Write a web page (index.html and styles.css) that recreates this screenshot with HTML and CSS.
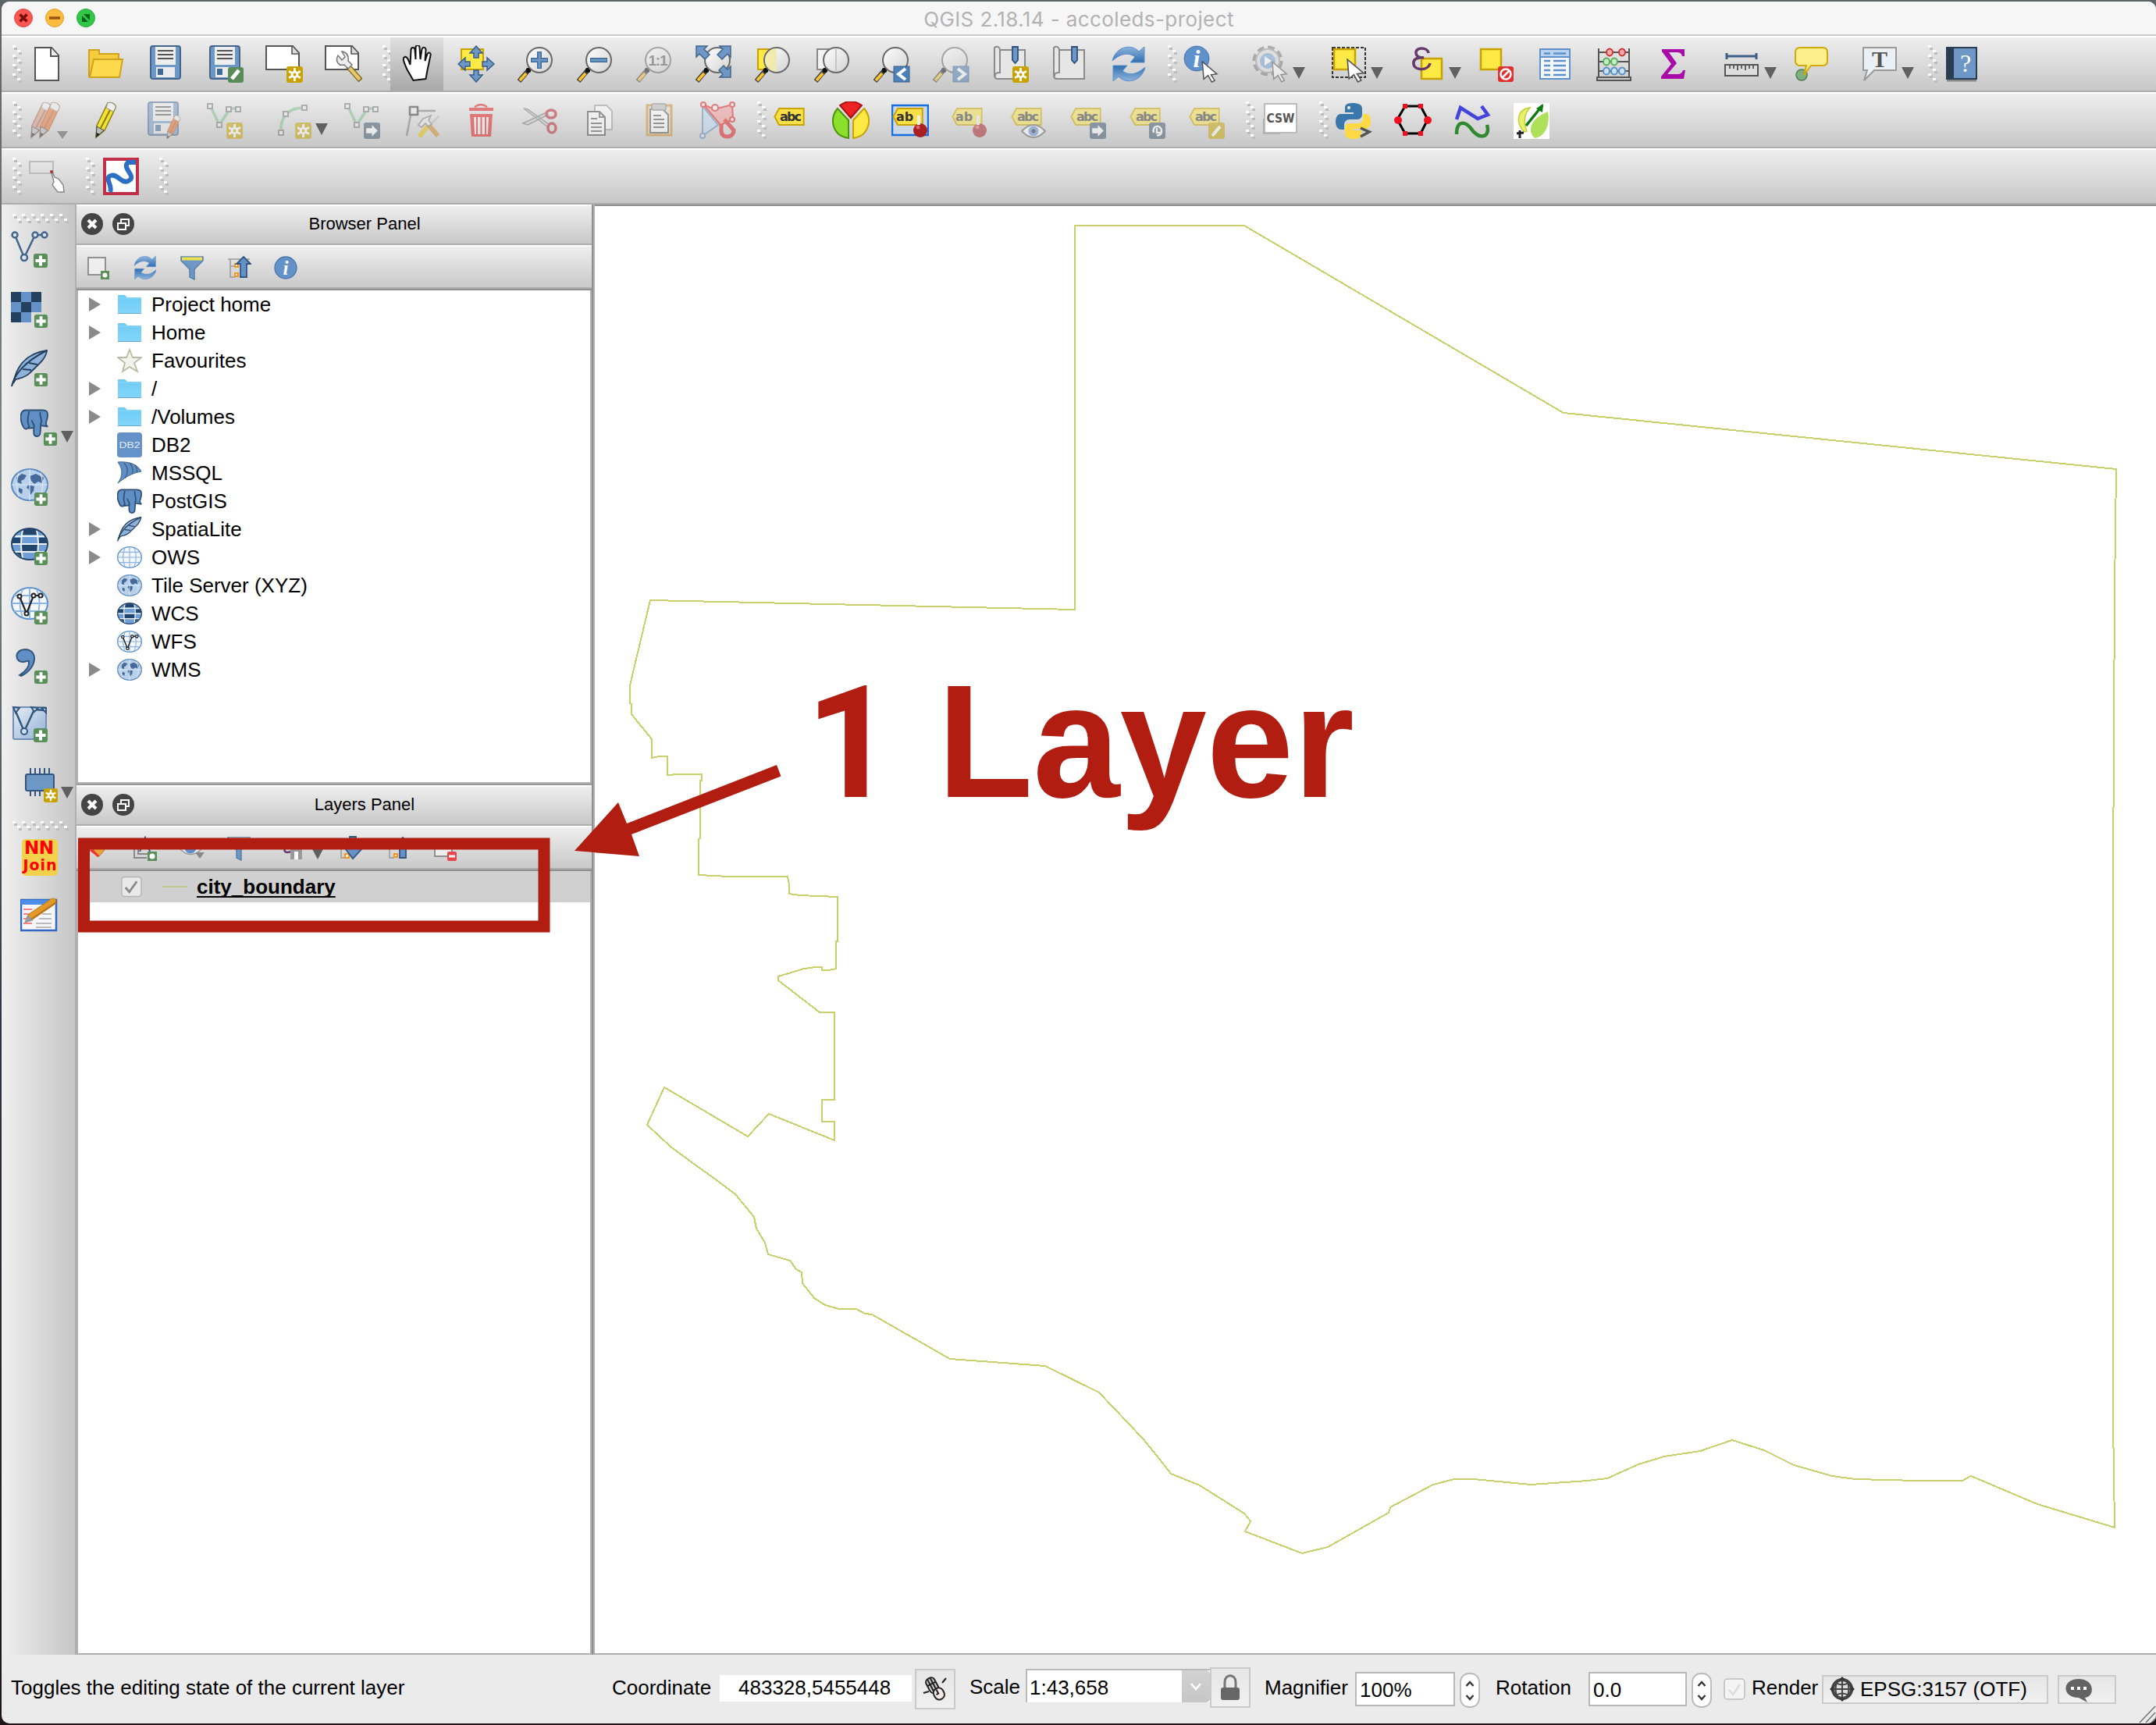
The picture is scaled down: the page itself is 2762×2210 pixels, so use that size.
FILE: index.html
```html
<!DOCTYPE html>
<html lang="en">
<head>
<meta charset="utf-8">
<title>QGIS 2.18.14 - accoleds-project</title>
<link rel="stylesheet" href="styles.css">
</head>
<body>
<svg class="defs" width="0" height="0" aria-hidden="true">
<defs>
<linearGradient id="gLens" x1="0" y1="0" x2="1" y2="1"><stop offset="0" stop-color="#fff"/><stop offset="1" stop-color="#d2d2d2"/></linearGradient>
<linearGradient id="gBlue" x1="0" y1="0" x2="0" y2="1"><stop offset="0" stop-color="#8fb4dc"/><stop offset="1" stop-color="#2f6fb3"/></linearGradient>
<linearGradient id="gFolder" x1="0" y1="0" x2="0" y2="1"><stop offset="0" stop-color="#6ccbf5"/><stop offset="1" stop-color="#83d5fa"/></linearGradient>
<linearGradient id="gPage" x1="0" y1="0" x2="1" y2="1"><stop offset="0" stop-color="#e8eef5"/><stop offset="1" stop-color="#8fb0d6"/></linearGradient>
<symbol id="grip-v" viewBox="0 0 12 50"><g fill="#fff"><path d="M0 1h4v3H0zM0 13h4v3H0zM0 25h4v3H0zM0 37h4v3H0zM6 7h4v3H6zM6 19h4v3H6zM6 31h4v3H6zM6 43h4v3H6z"/></g><g fill="#bdbdbd"><path d="M2 4h4v3H2zM2 16h4v3H2zM2 28h4v3H2zM2 40h4v3H2zM8 10h4v3H8zM8 22h4v3H8zM8 34h4v3H8zM8 46h4v3H8z"/></g></symbol>
<symbol id="grip-h" viewBox="0 0 74 12"><g fill="#fff"><path d="M0 0h4v3H0zM12 0h4v3h-4zM24 0h4v3h-4zM36 0h4v3h-4zM48 0h4v3h-4zM60 0h4v3h-4zM6 6h4v3H6zM18 6h4v3h-4zM30 6h4v3h-4zM42 6h4v3h-4zM54 6h4v3h-4zM66 6h4v3h-4z"/></g><g fill="#bdbdbd"><path d="M2 3h4v3H2zM14 3h4v3h-4zM26 3h4v3h-4zM38 3h4v3h-4zM50 3h4v3h-4zM62 3h4v3h-4zM8 9h4v3H8zM20 9h4v3h-4zM32 9h4v3h-4zM44 9h4v3h-4zM56 9h4v3h-4zM68 9h4v3h-4z"/></g></symbol>
<symbol id="b-plus" viewBox="0 0 20 20"><rect x="1" y="1" width="18" height="18" rx="3" fill="#5b8f5a"/><path d="M10 3.500v13M3.500 10h13" stroke="#fff" stroke-width="4"/></symbol>
<symbol id="b-star" viewBox="0 0 20 20"><rect x="0" y="0" width="20" height="20" rx="3" fill="#c8a200"/><path d="M10 2v16M3 6l14 8M17 6L3 14" stroke="#fff" stroke-width="2.600"/><circle cx="10" cy="10" r="4.500" fill="#fff"/><circle cx="10" cy="10" r="1.800" fill="#c8a200"/></symbol>
<symbol id="b-arrow" viewBox="0 0 20 20"><rect width="20" height="20" rx="3" fill="#3c566d"/><path d="M3 7h7V3l7 7-7 7v-4H3z" fill="#fff"/></symbol>
<symbol id="mag" viewBox="0 0 48 48"><path d="M14 33L3 46" stroke="#444" stroke-width="6"/><path d="M12 36L4 45" stroke="#ffc62b" stroke-width="3.500"/><circle cx="15" cy="32" r="3.200" fill="#111"/><circle cx="29" cy="19" r="16" fill="url(#gLens)" stroke="#6a6a6a" stroke-width="2"/></symbol>
<symbol id="cursor" viewBox="0 0 24 30"><path d="M1 1l20 17-8 1 5 8-4 2-5-9-6 5z" fill="#fff" stroke="#555" stroke-width="1.600"/></symbol>
<symbol id="tag" viewBox="0 0 42 24"><path d="M7 1H40V23H7L1 12z" fill="#f8e045" stroke="#c8a200" stroke-width="2"/></symbol>

<symbol id="i-new" viewBox="0 0 48 48"><path d="M9 3H30L39 13V45H9Z" fill="#fff" stroke="#555" stroke-width="2"/><path d="M29 3V14H39" fill="#eee" stroke="#555" stroke-width="2"/></symbol>
<symbol id="i-open" viewBox="0 0 48 48"><path d="M2 6H15V11H40V40H2Z" fill="#f5cd3c" stroke="#d0a21d" stroke-width="2"/><path d="M8 18H45L41 41H3Z" fill="#fdd94c" stroke="#d0a21d" stroke-width="2"/></symbol>
<symbol id="i-save" viewBox="0 0 48 48"><rect x="5" y="1" width="38" height="42" rx="3" fill="#6d97c4" stroke="#44658b" stroke-width="2"/><rect x="11" y="2" width="26" height="23" fill="#eee"/><path d="M14 7h20M14 12h20M14 17h20" stroke="#555" stroke-width="2"/><rect x="12" y="28" width="24" height="13" fill="#ececec"/><rect x="14" y="30" width="7" height="8" fill="#3f6a97"/></symbol>
<symbol id="i-saveas" viewBox="0 0 48 48"><use href="#i-save"/><rect x="28" y="28" width="20" height="20" rx="3" fill="#5a8c5a"/><path d="M33 43l9-11" stroke="#fff" stroke-width="5"/></symbol>
<symbol id="i-comp" viewBox="0 0 48 48"><path d="M1 1H35L43 10V31H1Z" fill="#fff" stroke="#555" stroke-width="2"/><path d="M34 1V11H43" fill="#ddd" stroke="#555" stroke-width="1.600"/><use href="#b-star" x="27" y="27" width="21" height="21"/></symbol>
<symbol id="i-mgr" viewBox="0 0 48 48"><path d="M1 1H35L43 10V31H1Z" fill="#fff" stroke="#555" stroke-width="2"/><path d="M34 1V11H43" fill="#ddd" stroke="#555" stroke-width="1.600"/><path d="M30 27l16 18" stroke="#77601e" stroke-width="7"/><path d="M30 27l15 17" stroke="#e4c869" stroke-width="4.500"/><path d="M17 13c-4 8 1 14 8 12l5 5 5-5-5-5c1-7-2-11-8-12l4 7-4 4z" fill="#eee" stroke="#777" stroke-width="1.500"/></symbol>
<symbol id="i-hand" viewBox="0 0 48 48"><path transform="translate(3.500 0)" d="M16 45L8 31C3 20 2 16 5 15c3-1 5 4 7 10L13 6c0-4 5-4 5 0l1 12V3c0-4 5-4 5 0l1 15 2-13c1-3 5-3 5 1l-1 14 3-9c2-3 5-1 4 2l-4 19-2 11z" fill="#fff" stroke="#111" stroke-width="2"/></symbol>
<symbol id="i-pan" viewBox="0 0 48 48"><rect x="5" y="5" width="28" height="26" fill="#ffe945" stroke="#c8a200" stroke-width="2"/><g id="panarrow"><path d="M24 1l8 9h-5v6h-6v-6h-5z" fill="#6d97c4" stroke="#3a5e87" stroke-width="1.500"/></g><use href="#panarrow" transform="rotate(90 24 24)"/><use href="#panarrow" transform="rotate(180 24 24)"/><use href="#panarrow" transform="rotate(270 24 24)"/></symbol>
<symbol id="i-zin" viewBox="0 0 48 48"><use href="#mag"/><path d="M29 8v22M18 19h22" stroke="#3f6a97" stroke-width="6"/><path d="M29 9v20M19 19h20" stroke="#6d97c4" stroke-width="3"/></symbol>
<symbol id="i-zout" viewBox="0 0 48 48"><use href="#mag"/><path d="M18 19h22" stroke="#3f6a97" stroke-width="6"/><path d="M19 19h20" stroke="#6d97c4" stroke-width="3"/></symbol>
<symbol id="i-z11" viewBox="0 0 48 48"><use href="#mag"/><text x="29" y="26" font-size="19" font-family="Liberation Sans,sans-serif" font-weight="bold" fill="#555" text-anchor="middle" textLength="25">1:1</text></symbol>
<symbol id="i-zfull" viewBox="0 0 48 48"><use href="#mag"/><path d="M2 1h14l-4 4 7 7-6 6-7-7-4 4zM46 1v14l-4-4-7 7-6-6 7-7-4-4zM46 41h-14l4-4-5-5 6-6 5 5 4-4z" fill="#6d97c4" stroke="#44658b" stroke-width="1.500"/></symbol>
<symbol id="i-zsel" viewBox="0 0 48 48"><rect x="5" y="5" width="20" height="26" fill="#ffe945" stroke="#c8a200" stroke-width="2"/><use href="#mag"/><path d="M29 4a15 15 0 0 0 0 30z" fill="#f3eaa0" opacity=".8"/></symbol>
<symbol id="i-zlay" viewBox="0 0 48 48"><rect x="5" y="5" width="20" height="26" fill="#f3f3f3" stroke="#888" stroke-width="2"/><use href="#mag"/><path d="M29 5v28" stroke="#bbb" stroke-width="1.500"/></symbol>
<symbol id="i-zprev" viewBox="0 0 48 48"><use href="#mag"/><rect x="27" y="27" width="20" height="20" fill="#4d7fb8" stroke="#3a5e87"/><path d="M42 30l-9 7 9 7" fill="none" stroke="#fff" stroke-width="4"/></symbol>
<symbol id="i-znext" viewBox="0 0 48 48"><use href="#mag"/><rect x="27" y="27" width="20" height="20" fill="#4d7fb8" stroke="#3a5e87"/><path d="M33 30l9 7-9 7" fill="none" stroke="#fff" stroke-width="4"/></symbol>
<symbol id="i-book" viewBox="0 0 48 48"><path d="M4 3c4-3 7 0 7 3H43V43H8C5 43 4 41 4 38z" fill="#e6e6e6" stroke="#8a8a8a" stroke-width="2"/><path d="M11 5V35c-4 0-7 1-6 5" fill="none" stroke="#8a8a8a" stroke-width="2"/><path d="M27 2h7V19l-3.500 4L27 19z" fill="#6d97c4" stroke="#2d5079" stroke-width="1.800"/></symbol>
<symbol id="i-bookn" viewBox="0 0 48 48"><use href="#i-book"/><use href="#b-star" x="27" y="27" width="21" height="21"/></symbol>
<symbol id="i-refresh" viewBox="0 0 48 48"><g id="halfr"><path d="M3 20C7 2 27-3 37 8l7-6V22H26l6-7C24 9 14 10 3 20z" fill="url(#gBlue)" stroke="#5d8fc8"/></g><use href="#halfr" transform="rotate(180 24 24)"/></symbol>
<symbol id="i-info" viewBox="0 0 48 48"><circle cx="24" cy="24" r="21" fill="#6491c7" stroke="#4976ab" stroke-width="2"/><text x="24" y="37" font-family="Liberation Serif,serif" font-weight="bold" font-style="italic" font-size="38" fill="#fff" text-anchor="middle">i</text></symbol>
<symbol id="i-ident" viewBox="0 0 48 48"><circle cx="17" cy="17" r="16" fill="#5f92cc" stroke="#4976ab"/><text x="17" y="28" font-family="Liberation Serif,serif" font-weight="bold" font-style="italic" font-size="32" fill="#fff" text-anchor="middle">i</text><use href="#cursor" x="23" y="20" width="23" height="28"/></symbol>
<symbol id="i-run" viewBox="0 0 48 48"><circle cx="20" cy="20" r="16" fill="none" stroke="#777" stroke-width="7" stroke-dasharray="8 4.500"/><circle cx="20" cy="20" r="15" fill="#ddd" stroke="#999" stroke-width="2"/><circle cx="20" cy="20" r="10" fill="#6f9fd2"/><path d="M16 14l9 6-9 6z" fill="#fff"/><use href="#cursor" x="25" y="20" width="22" height="28"/></symbol>
<symbol id="i-select" viewBox="0 0 48 48"><rect x="3" y="3" width="42" height="38" fill="none" stroke="#333" stroke-width="2" stroke-dasharray="4 2"/><rect x="5" y="5" width="27" height="26" fill="#ffe945" stroke="#c8a200" stroke-width="2.500"/><use href="#cursor" x="20" y="17" width="27" height="31"/></symbol>
<symbol id="i-expr" viewBox="0 0 48 48"><rect x="17" y="17" width="26" height="26" fill="#ffe945" stroke="#c8a200" stroke-width="2.500"/><path d="M26 10C25 2 9 2 10 10c0 5 5 6 10 6C10 15 6 19 7 24c1 9 19 9 21-1" fill="none" stroke="#653a6b" stroke-width="3.500"/></symbol>
<symbol id="i-desel" viewBox="0 0 48 48"><rect x="5" y="5" width="26" height="26" fill="#ffe945" stroke="#c8a200" stroke-width="2.500"/><rect x="27" y="27" width="20" height="20" rx="3" fill="#e03030"/><circle cx="37" cy="37" r="6.500" fill="none" stroke="#fff" stroke-width="2.500"/><path d="M33 41l8-8" stroke="#fff" stroke-width="2.500"/></symbol>
<symbol id="i-table" viewBox="0 0 48 48"><rect x="5" y="5" width="38" height="38" fill="#f4f8fc" stroke="#5f92cc" stroke-width="2"/><rect x="6" y="6" width="36" height="9" fill="#b9d3ee"/><path d="M5 15h38" stroke="#5f92cc" stroke-width="2"/><path d="M10 10.500h8M22 10.500h16M10 20h8M22 20h16M10 26h8M22 26h16M10 32h8M22 32h16M10 38h8M22 38h16" stroke="#5f92cc" stroke-width="2.500"/></symbol>
<symbol id="i-abac" viewBox="0 0 48 48"><path d="M4 4V41M43 4V41M4 9h39M4 21h39M4 33h39" stroke="#555" stroke-width="2"/><rect x="2" y="41" width="43" height="4" fill="#ccc" stroke="#555" stroke-width="2"/><g fill="#f4a9a9" stroke="#c33" stroke-width="2"><ellipse cx="18" cy="9" rx="4" ry="4.500"/><ellipse cx="34" cy="9" rx="4" ry="4.500"/></g><g fill="#c6ecc6" stroke="#5cad5c" stroke-width="2"><ellipse cx="14" cy="21" rx="4" ry="4.500"/><ellipse cx="24" cy="21" rx="4" ry="4.500"/></g><g fill="#cfe2f5" stroke="#558fc4" stroke-width="2"><ellipse cx="14" cy="33" rx="4" ry="4.500"/><ellipse cx="24" cy="33" rx="4" ry="4.500"/><ellipse cx="34" cy="33" rx="4" ry="4.500"/></g></symbol>
<symbol id="i-sigma" viewBox="0 0 48 48"><path d="M9 5H38V14H35C34 10 32 9 27 9H18l10 14L16 37H29c4 0 6-2 7-5h3L37 43H8V40L21 24 9 8z" fill="#a80ba8"/></symbol>
<symbol id="i-meas" viewBox="0 0 48 48"><path d="M4 14H42M4 10v8M42 10v8" stroke="#3f5f85" stroke-width="3"/><rect x="2" y="25" width="42" height="14" fill="#ddd" stroke="#555" stroke-width="2"/><path d="M8 25v5M13 25v5M18 25v7M23 25v5M28 25v7M33 25v5M38 25v5" stroke="#555" stroke-width="1.800"/></symbol>
<symbol id="i-tip" viewBox="0 0 48 48"><circle cx="12" cy="38" r="7" fill="#7db07d" stroke="#557a55" stroke-width="1.500"/><path d="M10 3H39q6 0 6 6V20q0 6-6 6H24L15 38l3-12H10q-6 0-6-6V9q0-6 6-6z" fill="#fbee8b" stroke="#d1a90d" stroke-width="2"/></symbol>
<symbol id="i-text" viewBox="0 0 48 48"><path d="M3 3H45V32H17L4 45l4-13H3z" fill="#eaf0f4" stroke="#999" stroke-width="2"/><text x="24" y="28" font-family="Liberation Serif,serif" font-size="30" font-weight="bold" fill="#555" text-anchor="middle">T</text></symbol>
<symbol id="i-help" viewBox="0 0 48 48"><path d="M4 45H42" stroke="#888" stroke-width="3"/><rect x="4" y="3" width="38" height="40" fill="#6d97c4" stroke="#2b3d52" stroke-width="2"/><rect x="4" y="3" width="9" height="40" fill="#2b3d52"/><text x="28" y="34" font-family="Liberation Serif,serif" font-size="32" fill="#fff" text-anchor="middle">?</text></symbol>

<symbol id="pencil" viewBox="0 0 48 48"><path d="M24 2c4-2 11 2 10 6L20 37 9 46l1-15z" fill="var(--pc,#f2e234)" stroke="var(--ps,#8a7d10)" stroke-width="1.500"/><path d="M29 7L15 34" stroke="var(--ps,#8a7d10)" stroke-width="2"/><path d="M24 2c4-2 11 2 10 6l-3 5-9-5z" fill="#f0eeee" stroke="#999"/><path d="M9 46l1-14 9 5z" fill="#bbb" stroke="#444"/><path d="M9 46l1-6 4 2z" fill="#222"/></symbol>
<symbol id="i-pencils" viewBox="0 0 48 48"><g style="--pc:#d99a80;--ps:#a2614a"><use href="#pencil" x="-5" y="0" width="48" height="48"/></g><g style="--pc:#e5722a;--ps:#c05a34"><use href="#pencil" x="6" y="0" width="48" height="48"/></g></symbol>
<symbol id="i-pencil" viewBox="0 0 48 48"><use href="#pencil" x="2" y="0" width="48" height="48"/></symbol>
<symbol id="i-sedit" viewBox="0 0 48 48"><use href="#i-save" x="-3"/><g style="--pc:#e8661c;--ps:#b9541c"><use href="#pencil" x="20" y="17" width="32" height="32"/></g></symbol>
<symbol id="vshape" viewBox="0 0 48 48"><path d="M5 5L17 30L31 9H42" fill="none" stroke="#7cc08a" stroke-width="3.500"/><g fill="#eee" stroke="#777" stroke-width="2"><rect x="2" y="3" width="6" height="6"/><rect x="14" y="27" width="6" height="6"/><rect x="26" y="7" width="6" height="6"/><rect x="38" y="7" width="6" height="6"/></g></symbol>
<symbol id="i-addf" viewBox="0 0 48 48"><use href="#vshape"/><use href="#b-star" x="26" y="27" width="21" height="21"/></symbol>
<symbol id="i-movef" viewBox="0 0 48 48"><use href="#vshape"/><use href="#b-arrow" x="26" y="27" width="21" height="21"/></symbol>
<symbol id="i-curve" viewBox="0 0 48 48"><path d="M8 40C7 25 12 8 38 8" fill="none" stroke="#7cc08a" stroke-width="3.500"/><g fill="#eee" stroke="#777" stroke-width="2"><rect x="5" y="37" width="6" height="6"/><rect x="11" y="13" width="6" height="6"/><rect x="35" y="5" width="6" height="6"/></g><use href="#b-star" x="26" y="27" width="21" height="21"/></symbol>
<symbol id="i-node" viewBox="0 0 48 48"><path d="M11 13L5 44M15 12H42" stroke="#777" stroke-width="2.500"/><rect x="9" y="7" width="10" height="10" fill="#eee" stroke="#333" stroke-width="2.500"/><path d="M46 19L34 31" stroke="#bbb" stroke-width="3"/><path d="M34 29L21 45" stroke="#e6c000" stroke-width="6"/><path d="M32 29l13 15" stroke="#d08a20" stroke-width="6"/><path d="M20 30l6-8 10-4-3 6 4 5-5 3-3-4-5 5z" fill="#e8e8e8" stroke="#777" stroke-width="1.500"/></symbol>
<symbol id="i-trash" viewBox="0 0 48 48"><path d="M16 7q8-6 16 0" fill="none" stroke="#e01515" stroke-width="2.500"/><rect x="9" y="8" width="31" height="4" fill="#e01515"/><path d="M10 16H39L37 45H12z" fill="#e01515"/><path d="M15 20H34L33 42H16z" fill="#eee"/><path d="M19 20v22M24.500 20v22M30 20v22" stroke="#e01515" stroke-width="2"/></symbol>
<symbol id="i-cut" viewBox="0 0 48 48"><path d="M3 9L34 33l2-3L8 10zM2 28l30-14 2 3L8 30z" fill="#ccc" stroke="#777" stroke-width="1.500"/><g fill="none" stroke="#b81c2c" stroke-width="3.500"><ellipse cx="38" cy="16" rx="6" ry="5"/><ellipse cx="39" cy="34" rx="5" ry="6"/></g></symbol>
<symbol id="i-copy" viewBox="0 0 48 48"><path d="M18 5H33l7 7V36H18z" fill="#fff" stroke="#999" stroke-width="2"/><path d="M9 13H24l7 7V43H9z" fill="#fff" stroke="#444" stroke-width="2"/><path d="M24 13v7h7M13 22h8M13 28h14M13 33h14M13 38h14" fill="none" stroke="#555" stroke-width="2"/></symbol>
<symbol id="i-paste" viewBox="0 0 48 48"><rect x="9" y="5" width="31" height="38" fill="#e9dcc0" stroke="#c98d2e" stroke-width="3"/><path d="M13 10H29l7 7V40H13z" fill="#fff" stroke="#555" stroke-width="2"/><rect x="15" y="3" width="18" height="8" rx="2" fill="#bbb" stroke="#777" stroke-width="1.500"/><path d="M17 18h10M17 23h14M17 28h14M17 33h14" stroke="#555" stroke-width="2"/></symbol>
<symbol id="i-simp" viewBox="0 0 48 48"><path d="M4 6V44L24 30z" fill="#bed8f0" stroke="#5c88b5" stroke-width="2"/><path d="M5 4L19 10 42 4 43 23 27 30z" fill="#f29a9a" stroke="#e01515" stroke-width="2"/><path d="M28 29v9c0 10 16 9 16-1L32 23" fill="none" stroke="#e01515" stroke-width="5"/><g fill="#eee" stroke="#e01515" stroke-width="2"><circle cx="5" cy="4" r="3"/><circle cx="20" cy="8" r="4"/><circle cx="42" cy="4" r="3"/><circle cx="42" cy="23" r="3"/></g><circle cx="4" cy="44" r="3" fill="#eee" stroke="#5c88b5" stroke-width="2"/></symbol>
<symbol id="lab" viewBox="0 0 48 48"><use href="#tag" x="0" y="8" width="43" height="23"/><text x="23" y="25" font-family="DejaVu Sans,sans-serif" font-weight="bold" font-size="16" fill="#333" text-anchor="middle" textLength="28">abc</text></symbol>
<symbol id="lab2" viewBox="0 0 48 48"><use href="#tag" x="0" y="8" width="43" height="23"/><text x="17" y="25" font-family="DejaVu Sans,sans-serif" font-weight="bold" font-size="16" fill="#333" text-anchor="middle">ab</text><circle cx="37" cy="37" r="9" fill="#a82020"/><path d="M35 18v12" stroke="#eee" stroke-width="4"/><circle cx="34" cy="33" r="2.500" fill="#d66"/></symbol>
<symbol id="i-pie" viewBox="0 0 48 48"><path d="M24 21L10 5Q24-5 38 5z" fill="#ee2222" stroke="#a81212" stroke-width="2"/><path d="M21 24L7 9C-4 22 0 44 21 47z" fill="#8be02c" stroke="#4c9410" stroke-width="2"/><path d="M27 24L41 9c11 13 7 35-14 38z" fill="#ffe945" stroke="#c8a200" stroke-width="2"/></symbol>
<symbol id="i-labpin" viewBox="0 0 48 48"><rect x="1" y="5" width="46" height="38" fill="#ccd8e6" stroke="#1a6fe0" stroke-width="2.500"/><use href="#lab2"/></symbol>
<symbol id="i-labeye" viewBox="0 0 48 48"><use href="#lab"/><path d="M15 38Q30 22 45 38Q30 54 15 38z" fill="#fff" stroke="#666" stroke-width="2"/><circle cx="30" cy="38" r="6.500" fill="#5f8fd0"/><circle cx="30" cy="38" r="2.500" fill="#223"/></symbol>
<symbol id="i-labmov" viewBox="0 0 48 48"><use href="#lab"/><use href="#b-arrow" x="26" y="27" width="21" height="21"/></symbol>
<symbol id="i-labrot" viewBox="0 0 48 48"><use href="#lab"/><rect x="26" y="27" width="21" height="21" rx="3" fill="#3c566d"/><path d="M32 40c-3-10 10-11 10-2 0 5-4 6-6 5M36 34v6h6" fill="none" stroke="#fff" stroke-width="2.500"/></symbol>
<symbol id="i-labed" viewBox="0 0 48 48"><use href="#lab"/><rect x="26" y="27" width="21" height="21" rx="3" fill="#c8a200"/><path d="M31 44l10-12" stroke="#fff" stroke-width="4"/></symbol>
<symbol id="i-csw" viewBox="0 0 48 48"><rect x="2" y="22" width="22" height="20" fill="#aaa"/><rect x="4" y="3" width="41" height="37" fill="#fff" stroke="#bbb" stroke-width="2"/><text x="24.500" y="27" font-family="DejaVu Sans,sans-serif" font-weight="bold" font-size="16" fill="#555" text-anchor="middle" textLength="36" lengthAdjust="spacingAndGlyphs">CSW</text></symbol>
<symbol id="i-py" viewBox="0 0 48 48"><path d="M23 2c-9 0-10 3-10 7v5h11v2H8c-5 0-7 5-7 10 0 6 3 10 7 10h4v-6c0-4 3-7 7-7h10c3 0 6-3 6-6V9c0-5-5-7-12-7z" fill="#3a77ab"/><circle cx="18" cy="8" r="2" fill="#fff"/><path d="M24 48c9 0 10-3 10-7v-4H23v-2h16c5 0 7-4 7-10s-3-9-7-9h-3v5c0 5-3 7-7 7H19c-4 0-6 3-6 6v7c0 5 4 7 11 7z" fill="#ffd944"/><path d="M33 34l11 5-11 6" fill="none" stroke="#555" stroke-width="3.500"/></symbol>
<symbol id="i-hex" viewBox="0 0 48 48"><path d="M14 6H34L43 23 34 41H14L4 23z" fill="none" stroke="#000" stroke-width="3"/><g fill="#f01020"><rect x="11" y="3" width="6" height="6"/><rect x="31" y="3" width="6" height="6"/><rect x="31" y="38" width="6" height="6"/><rect x="11" y="38" width="6" height="6"/><circle cx="5" cy="24" r="5"/><circle cx="43" cy="24" r="5"/></g></symbol>
<symbol id="i-waves" viewBox="0 0 48 48"><path d="M4 23L9 8 31 22 44 17 36 6" fill="none" stroke="#4444dd" stroke-width="4.500"/><path d="M4 42C4 22 16 27 22 34 31 49 48 48 43 30" fill="none" stroke="#2e8a2e" stroke-width="4.500"/></symbol>
<symbol id="i-grass" viewBox="0 0 48 48"><rect x="1" y="2" width="46" height="46" fill="#fff"/><path d="M15 39C3 28 5 10 22 8 13 18 14 28 18 38z" fill="#e8f070" stroke="#c3d030" stroke-width="1.500"/><path d="M28 47C18 38 22 22 45 13c3 16-3 32-17 34z" fill="#aee05a"/><path d="M17 31L38 5" stroke="#0a7a10" stroke-width="3.500"/><path d="M30 9l9-6-1 11z" fill="#0a7a10"/><path d="M9 37v10M5 41l9-1" stroke="#222" stroke-width="3"/></symbol>
<symbol id="i-recthand" viewBox="0 0 48 48"><rect x="2" y="5" width="30" height="15" fill="none" stroke="#bbb" stroke-width="2"/><path d="M30 19l3 12-2 4 7 9h8l-1-9-6-8-5-2-3-7z" fill="#fff" stroke="#888" stroke-width="1.500"/><circle cx="30" cy="18" r="2" fill="#a33"/></symbol>
<symbol id="i-river" viewBox="0 0 48 48"><rect x="4" y="2" width="42" height="44" fill="#fff" stroke="#c12f48" stroke-width="4"/><path d="M44 6H34C25 14 47 24 34 30 25 34 21 20 12 23 3 26 15 36 11 44" fill="none" stroke="#2c6fc4" stroke-width="6"/></symbol>

<symbol id="i-dvec" viewBox="0 0 48 48"><path d="M5 5L17 34 31 5H43" fill="none" stroke="#44658b" stroke-width="2.500"/><g fill="#dde5ee" stroke="#44658b" stroke-width="2.500"><circle cx="5" cy="5" r="3.500"/><circle cx="17" cy="34" r="4"/><circle cx="31" cy="5" r="3.500"/><circle cx="43" cy="5" r="3.500"/></g><use href="#b-plus" x="28" y="28" width="20" height="20"/></symbol>
<symbol id="i-dras" viewBox="0 0 48 48"><path d="M0 2H39V28H26V41H0z" fill="#6491c7"/><path d="M0 2h13v13H0zM26 2h13v13H26zM13 15h13v13H13zM0 28h13v13H0z" fill="#24405f"/><use href="#b-plus" x="29" y="30" width="19" height="19"/></symbol>
<symbol id="feather" viewBox="0 0 48 48"><path d="M3 43C6 26 16 5 46 1 45 12 34 20 25 29 19 36 12 36 6 38z" fill="#8fb2da" stroke="#24405f" stroke-width="1.800"/><path d="M1 47C4 32 18 15 46 1M15 25l11 1M23 17l11 2" fill="none" stroke="#24405f" stroke-width="2"/></symbol>
<symbol id="i-dfea" viewBox="0 0 48 48"><use href="#feather"/><use href="#b-plus" x="29" y="29" width="19" height="19"/></symbol>
<symbol id="eleph" viewBox="0 0 48 48"><path d="M8 2C-2 4 0 20 4 28 7 36 12 36 15 29v4l8-1v9c0 8 11 7 11 0l1-13 12 2c-5-3-3-7-1-14C48 6 46 2 38 2z" fill="#5f8fc4" stroke="#2e4f75" stroke-width="2.500"/><path d="M15 29C10 20 14 12 15 4M34 27c6-8-2-14 0-22M23 32c3-6-4-8-3-13" fill="none" stroke="#2e4f75" stroke-width="2.500"/></symbol>
<symbol id="i-dpg" viewBox="0 0 48 48"><use href="#eleph" x="0" y="0" width="36" height="36"/><use href="#b-plus" x="29" y="29" width="19" height="19"/></symbol>
<symbol id="gworld" viewBox="0 0 48 42"><ellipse cx="24" cy="21" rx="23" ry="20" fill="#b9d0ea" stroke="#5a8ac0" stroke-width="2"/><path d="M7 12l7-5 6 2-3 5-4 2 1 4-6-2zM24 10l8-3 10 5-2 7-5-2-5 3-4-4zM22 21l8 2-1 6-4 5-2-7-3-2zM10 25l5 2-1 6-4-3z" fill="#46699a"/><path d="M1 21h46M24 1v40M10 6q-5 15 0 30M38 6q5 15 0 30" fill="none" stroke="#dce8f5" stroke-width="1.200"/></symbol>
<symbol id="gdark" viewBox="0 0 48 42"><ellipse cx="24" cy="21" rx="23" ry="20" fill="#6f9fd6"/><path d="M2 13H14V21H1zM34 13H46L47 21H34zM14 21H34V31H14zM14 2H34V9H14zM5 31H14V38zM43 31H34V38z" fill="#24456b"/><path d="M1 21h46M4 11h40M4 31h40M15 3q-4 18 0 36M33 3q4 18 0 36" fill="none" stroke="#eef4fb" stroke-width="2"/><ellipse cx="24" cy="21" rx="23" ry="20" fill="none" stroke="#24456b" stroke-width="2"/></symbol>
<symbol id="glight" viewBox="0 0 48 42"><ellipse cx="24" cy="21" rx="23" ry="20" fill="#f3f8fd" stroke="#5a8fd0" stroke-width="2"/><path d="M1 21h46M4 11h40M4 31h40M24 1v40M15 3q-7 18 0 36M33 3q7 18 0 36" fill="none" stroke="#8db4e4" stroke-width="1.800"/></symbol>
<symbol id="gvec" viewBox="0 0 48 42"><use href="#glight"/><path d="M11 12L20 34 29 11H38" fill="none" stroke="#222" stroke-width="2.200"/><g fill="#fff" stroke="#222" stroke-width="2"><circle cx="11" cy="12" r="2.500"/><circle cx="20" cy="34" r="2.500"/><circle cx="29" cy="11" r="2.500"/><circle cx="38" cy="11" r="2.500"/></g></symbol>
<symbol id="i-dg1" viewBox="0 0 48 48"><use href="#gworld" width="48" height="42"/><use href="#b-plus" x="29" y="30" width="19" height="19"/></symbol>
<symbol id="i-dg2" viewBox="0 0 48 48"><use href="#gdark" width="48" height="42"/><use href="#b-plus" x="29" y="30" width="19" height="19"/></symbol>
<symbol id="i-dg3" viewBox="0 0 48 48"><use href="#gvec" width="48" height="42"/><use href="#b-plus" x="29" y="30" width="19" height="19"/></symbol>
<symbol id="i-dcom" viewBox="0 0 48 48"><path d="M19 4c-16 0-14 17-3 16 3 0 5-2 7-1 1 7-4 13-12 18l2 1C34 28 35 5 19 4z" fill="#5f8fc4" stroke="#33567f" stroke-width="2"/><use href="#b-plus" x="29" y="30" width="19" height="19"/></symbol>
<symbol id="i-dvirt" viewBox="0 0 48 48"><rect x="3" y="2" width="42" height="41" rx="2" fill="url(#gPage)" stroke="#7390b3" stroke-width="2"/><path d="M5 5L17 33 30 5 44 6" fill="none" stroke="#33567f" stroke-width="2.500"/><circle cx="17" cy="33" r="4" fill="#cfe0f2" stroke="#33567f" stroke-width="2"/><g fill="#cfe0f2" stroke="#33567f" stroke-width="2"><path d="M3 2l8 1-5 6zM26 2l9 1-5 5zM39 3l6 0 0 6z"/></g><use href="#b-plus" x="28" y="28" width="20" height="20"/></symbol>
<symbol id="i-dchip" viewBox="0 0 48 48"><path d="M13 4v9M19 4v9M25 4v9M31 4v9M37 4v9M13 32v8M19 32v8M25 32v8" stroke="#33567f" stroke-width="2"/><rect x="7" y="12" width="36" height="21" rx="2" fill="#6d97c4" stroke="#33567f" stroke-width="2"/><use href="#b-star" x="30" y="30" width="18" height="18"/></symbol>
<symbol id="i-nn" viewBox="0 0 48 48"><rect x="2" y="1" width="46" height="47" rx="5" fill="#f3d14a"/><text x="24" y="20" font-family="DejaVu Sans,sans-serif" font-weight="bold" font-size="23" fill="#f00" text-anchor="middle" textLength="38">NN</text><text x="25" y="41" font-family="DejaVu Sans,sans-serif" font-weight="bold" font-size="19" fill="#f00" text-anchor="middle" textLength="43">Join</text></symbol>
<symbol id="i-form" viewBox="0 0 48 48"><rect x="1" y="3" width="45" height="39" fill="#f7f7fb" stroke="#2f68c4" stroke-width="2.500"/><rect x="1" y="3" width="45" height="6" fill="#4c8ee8"/><path d="M4 15h11M4 21h9M4 27h8M4 33h11" stroke="#ff8080" stroke-width="2"/><path d="M28 21h12M24 27h16M20 33h20M20 38h20" stroke="#bbb" stroke-width="2"/><path d="M14 24L42 5" stroke="#b87412" stroke-width="9" stroke-linecap="round"/><path d="M14 23L42 4" stroke="#e39a2a" stroke-width="6" stroke-linecap="round"/><path d="M5 33l4-11 8 7z" fill="#999"/></symbol>

<symbol id="s-close" viewBox="0 0 28 28"><circle cx="14" cy="14" r="14" fill="#454545"/><path d="M9 9l10 10M19 9L9 19" stroke="#fff" stroke-width="4"/></symbol>
<symbol id="s-float" viewBox="0 0 28 28"><circle cx="14" cy="14" r="14" fill="#454545"/><path d="M11 12V8h10v8h-3" fill="none" stroke="#fff" stroke-width="2"/><rect x="7" y="13" width="10" height="8" fill="none" stroke="#fff" stroke-width="2"/></symbol>
<symbol id="s-add" viewBox="0 0 32 32"><rect x="3" y="3" width="22" height="22" fill="#eee" stroke="#888" stroke-width="1.800"/><rect x="19" y="20" width="11" height="11" fill="#5b8f5a"/><circle cx="24.500" cy="25.500" r="3" fill="#fff"/></symbol>
<symbol id="s-funnel" viewBox="0 0 32 32"><path d="M2 2H30V7L19 18V31l-6-3V18L2 7z" fill="#6d97c4" stroke="#5a80ab" stroke-width="1.500"/><rect x="3" y="2.500" width="26" height="4" fill="#ece04c"/></symbol>
<symbol id="s-coll" viewBox="0 0 32 32"><path d="M2 5H30M5 5V28h6M5 14h6" fill="none" stroke="#999" stroke-width="1.500"/><g fill="#fff" stroke="#f7941d" stroke-width="2"><rect x="11" y="11" width="4" height="4"/><rect x="11" y="23" width="4" height="4"/></g><path d="M22 2l9 9h-5V28h-8V11h-5z" fill="#6491c7" stroke="#33567f" stroke-width="1.800"/></symbol>
<symbol id="s-brush" viewBox="0 0 32 32"><path d="M8 18l8-8 8 8-8 9z" fill="#e9a63c" stroke="#c47a1c"/><path d="M4 18l5-1 8 8-2 2z" fill="#e33"/></symbol>
<symbol id="s-group" viewBox="0 0 32 32"><path d="M2 8V28H18M7 6V23H24" fill="none" stroke="#888" stroke-width="2"/><path d="M9 20l7-18 6 18" fill="none" stroke="#33567f" stroke-width="2"/><rect x="19" y="20" width="12" height="12" fill="#5b8f5a"/><circle cx="25" cy="26" r="3.500" fill="#fff"/></symbol>
<symbol id="s-eye" viewBox="0 0 32 32"><path d="M1 17Q14 6 28 17 14 30 1 17z" fill="#eee" stroke="#999" stroke-width="1.500"/><circle cx="14" cy="15" r="7.500" fill="#5f8fd0"/><path d="M20 21h12l-6 8z" fill="#888"/></symbol>
<symbol id="s-exp" viewBox="0 0 32 32"><path d="M12 8C10 2 1 4 2 9c1 3 4 4 8 4C2 13 0 21 6 21c4 0 6-2 7-4" fill="none" stroke="#653a6b" stroke-width="2.500"/><path d="M10 30V17h15V30h-5V23h-4v7z" fill="#999"/><path d="M15 20h5v10h-5z" fill="#fff"/></symbol>
<symbol id="s-expand" viewBox="0 0 32 32"><path d="M3 5V28h5" fill="none" stroke="#999" stroke-width="1.500"/><rect x="8" y="23" width="5" height="5" fill="#fff" stroke="#f7941d" stroke-width="2"/><path d="M14 1h8v15h8L18 29 8 16h6z" fill="#6491c7" stroke="#33567f" stroke-width="1.800"/></symbol>
<symbol id="s-rem" viewBox="0 0 32 32"><rect x="3" y="4" width="22" height="22" fill="#eee" stroke="#888" stroke-width="1.800"/><rect x="19" y="20" width="12" height="12" rx="2" fill="#e8474a"/><path d="M21 26h8" stroke="#fff" stroke-width="3"/></symbol>
<symbol id="t-folder" viewBox="0 0 32 32"><path d="M1 5q0-1 1-1h8l3 3H30q1 0 1 1V26q0 1-1 1H2q-1 0-1-1z" fill="url(#gFolder)"/><path d="M1 8h30" stroke="#8fdcfb"/><path d="M1 27.500h30" stroke="#5fa9cc"/></symbol>
<symbol id="t-star" viewBox="0 0 32 32"><path d="M16 2l4 10 11 0-9 7 4 11-10-6-9 6 3-11-9-7 11 0z" fill="#f3f3ee" stroke="#b9bba2" stroke-width="1.800"/></symbol>
<symbol id="t-db2" viewBox="0 0 32 32"><rect width="32" height="32" rx="4" fill="#6491c7"/><text x="16" y="20" font-family="Liberation Sans,sans-serif" font-size="11.500" fill="#e5eef8" text-anchor="middle" textLength="27" lengthAdjust="spacingAndGlyphs">DB2</text></symbol>
<symbol id="t-ms" viewBox="0 0 32 32"><path d="M1 2C14 1 26 4 31 14 20 16 12 20 1 29 8 19 7 10 1 2z" fill="#5f8fc4" stroke="#44658b"/><path d="M9 3c6 7 5 13 1 20M16 3c5 6 5 11 3 15M23 6c3 4 3 7 2 9" fill="none" stroke="#44658b" stroke-width="1.500"/></symbol>
</defs>
</svg>

<div class="window">
  <header class="titlebar">
    <svg class="lights" width="108" height="24" viewBox="0 0 108 24"><circle cx="12" cy="12" r="11.500" fill="#fc5753" stroke="#df4744"/><path d="M7.500 7.500l9 9M16.500 7.500l-9 9" stroke="#7a0a08" stroke-width="3.500"/><circle cx="52" cy="12" r="11.500" fill="#fdbc40" stroke="#de9f34"/><path d="M45 12h14" stroke="#985712" stroke-width="3.500"/><circle cx="92" cy="12" r="11.500" fill="#33c748" stroke="#27aa35"/><path d="M87 9v8h8zM89 7h8v8z" fill="#0a6118"/></svg>
    <h1 class="title">QGIS 2.18.14 - accoleds-project</h1>
  </header>

  <nav class="toolbar">
    <span class="grip"><svg><use href="#grip-v"/></svg></span>
    <span class="tool"><svg><use href="#i-new"/></svg></span>
    <span class="tool"><svg><use href="#i-open"/></svg></span>
    <span class="tool"><svg><use href="#i-save"/></svg></span>
    <span class="tool"><svg><use href="#i-saveas"/></svg></span>
    <span class="tool"><svg><use href="#i-comp"/></svg></span>
    <span class="tool"><svg><use href="#i-mgr"/></svg></span>
    <span class="grip"><svg><use href="#grip-v"/></svg></span>
    <span class="tool active"><svg><use href="#i-hand"/></svg></span>
    <span class="tool"><svg><use href="#i-pan"/></svg></span>
    <span class="tool"><svg><use href="#i-zin"/></svg></span>
    <span class="tool"><svg><use href="#i-zout"/></svg></span>
    <span class="tool off"><svg><use href="#i-z11"/></svg></span>
    <span class="tool"><svg><use href="#i-zfull"/></svg></span>
    <span class="tool"><svg><use href="#i-zsel"/></svg></span>
    <span class="tool"><svg><use href="#i-zlay"/></svg></span>
    <span class="tool"><svg><use href="#i-zprev"/></svg></span>
    <span class="tool off"><svg><use href="#i-znext"/></svg></span>
    <span class="tool"><svg><use href="#i-bookn"/></svg></span>
    <span class="tool"><svg><use href="#i-book"/></svg></span>
    <span class="tool"><svg><use href="#i-refresh"/></svg></span>
    <span class="grip"><svg><use href="#grip-v"/></svg></span>
    <span class="tool"><svg><use href="#i-ident"/></svg></span>
    <span class="tool menu off"><svg><use href="#i-run"/></svg></span>
    <span class="tool menu"><svg><use href="#i-select"/></svg></span>
    <span class="tool menu"><svg><use href="#i-expr"/></svg></span>
    <span class="tool"><svg><use href="#i-desel"/></svg></span>
    <span class="tool"><svg><use href="#i-table"/></svg></span>
    <span class="tool"><svg><use href="#i-abac"/></svg></span>
    <span class="tool"><svg><use href="#i-sigma"/></svg></span>
    <span class="tool menu"><svg><use href="#i-meas"/></svg></span>
    <span class="tool"><svg><use href="#i-tip"/></svg></span>
    <span class="tool menu"><svg><use href="#i-text"/></svg></span>
    <span class="grip"><svg><use href="#grip-v"/></svg></span>
    <span class="tool"><svg><use href="#i-help"/></svg></span>
  </nav>

  <nav class="toolbar">
    <span class="grip"><svg><use href="#grip-v"/></svg></span>
    <span class="tool off corner"><svg><use href="#i-pencils"/></svg></span>
    <span class="tool"><svg><use href="#i-pencil"/></svg></span>
    <span class="tool off"><svg><use href="#i-sedit"/></svg></span>
    <span class="tool off"><svg><use href="#i-addf"/></svg></span>
    <span class="tool menu off"><svg><use href="#i-curve"/></svg></span>
    <span class="tool off"><svg><use href="#i-movef"/></svg></span>
    <span class="tool off"><svg><use href="#i-node"/></svg></span>
    <span class="tool off"><svg><use href="#i-trash"/></svg></span>
    <span class="tool off"><svg><use href="#i-cut"/></svg></span>
    <span class="tool off"><svg><use href="#i-copy"/></svg></span>
    <span class="tool off"><svg><use href="#i-paste"/></svg></span>
    <span class="tool off"><svg><use href="#i-simp"/></svg></span>
    <span class="grip"><svg><use href="#grip-v"/></svg></span>
    <span class="tool"><svg><use href="#lab"/></svg></span>
    <span class="tool"><svg><use href="#i-pie"/></svg></span>
    <span class="tool"><svg><use href="#i-labpin"/></svg></span>
    <span class="tool off"><svg><use href="#lab2"/></svg></span>
    <span class="tool off"><svg><use href="#i-labeye"/></svg></span>
    <span class="tool off"><svg><use href="#i-labmov"/></svg></span>
    <span class="tool off"><svg><use href="#i-labrot"/></svg></span>
    <span class="tool off"><svg><use href="#i-labed"/></svg></span>
    <span class="grip"><svg><use href="#grip-v"/></svg></span>
    <span class="tool"><svg><use href="#i-csw"/></svg></span>
    <span class="grip"><svg><use href="#grip-v"/></svg></span>
    <span class="tool"><svg><use href="#i-py"/></svg></span>
    <span class="tool"><svg><use href="#i-hex"/></svg></span>
    <span class="tool"><svg><use href="#i-waves"/></svg></span>
    <span class="tool"><svg><use href="#i-grass"/></svg></span>
  </nav>

  <nav class="toolbar">
    <span class="grip"><svg><use href="#grip-v"/></svg></span>
    <span class="tool"><svg><use href="#i-recthand"/></svg></span>
    <span class="grip"><svg><use href="#grip-v"/></svg></span>
    <span class="tool"><svg><use href="#i-river"/></svg></span>
    <span class="grip"><svg><use href="#grip-v"/></svg></span>
  </nav>

  <main class="workspace">
    <nav class="dock">
      <span class="dock-grip first"><svg><use href="#grip-h"/></svg></span>
      <span class="dock-tool"><svg><use href="#i-dvec"/></svg></span>
      <span class="dock-tool"><svg><use href="#i-dras"/></svg></span>
      <span class="dock-tool"><svg><use href="#i-dfea"/></svg></span>
      <span class="dock-tool wide menu"><svg><use href="#i-dpg"/></svg></span>
      <span class="dock-tool"><svg><use href="#i-dg1"/></svg></span>
      <span class="dock-tool"><svg><use href="#i-dg2"/></svg></span>
      <span class="dock-tool"><svg><use href="#i-dg3"/></svg></span>
      <span class="dock-tool"><svg><use href="#i-dcom"/></svg></span>
      <span class="dock-tool"><svg><use href="#i-dvirt"/></svg></span>
      <span class="dock-tool wide menu"><svg><use href="#i-dchip"/></svg></span>
      <span class="dock-grip"><svg><use href="#grip-h"/></svg></span>
      <span class="dock-tool wide"><svg><use href="#i-nn"/></svg></span>
      <span class="dock-tool wide"><svg><use href="#i-form"/></svg></span>
    </nav>

    <aside class="panels">
      <section class="panel browser">
        <header class="panel-head"><svg><use href="#s-close"/></svg><svg><use href="#s-float"/></svg><h2>Browser Panel</h2></header>
        <div class="panel-tools">
          <span><svg><use href="#s-add"/></svg></span><span><svg><use href="#i-refresh"/></svg></span><span><svg><use href="#s-funnel"/></svg></span><span><svg><use href="#s-coll"/></svg></span><span><svg><use href="#i-info"/></svg></span>
        </div>
        <ul class="tree">
          <li class="branch"><svg><use href="#t-folder"/></svg>Project home</li>
          <li class="branch"><svg><use href="#t-folder"/></svg>Home</li>
          <li><svg><use href="#t-star"/></svg>Favourites</li>
          <li class="branch"><svg><use href="#t-folder"/></svg>/</li>
          <li class="branch"><svg><use href="#t-folder"/></svg>/Volumes</li>
          <li><svg><use href="#t-db2"/></svg>DB2</li>
          <li><svg><use href="#t-ms"/></svg>MSSQL</li>
          <li><svg><use href="#eleph"/></svg>PostGIS</li>
          <li class="branch"><svg><use href="#feather"/></svg>SpatiaLite</li>
          <li class="branch"><svg><use href="#glight"/></svg>OWS</li>
          <li><svg><use href="#gworld"/></svg>Tile Server (XYZ)</li>
          <li><svg><use href="#gdark"/></svg>WCS</li>
          <li><svg><use href="#gvec"/></svg>WFS</li>
          <li class="branch"><svg><use href="#gworld"/></svg>WMS</li>
        </ul>
      </section>
      <section class="panel layers">
        <header class="panel-head"><svg><use href="#s-close"/></svg><svg><use href="#s-float"/></svg><h2>Layers Panel</h2></header>
        <div class="panel-tools">
          <span><svg><use href="#s-brush"/></svg></span><span><svg><use href="#s-group"/></svg></span><span><svg><use href="#s-eye"/></svg></span><span><svg><use href="#s-funnel"/></svg></span><span class="menu"><svg><use href="#s-exp"/></svg></span><span><svg><use href="#s-expand"/></svg></span><span><svg><use href="#s-coll"/></svg></span><span><svg><use href="#s-rem"/></svg></span>
        </div>
        <div class="layer-list">
          <div class="layer"><svg class="check" viewBox="0 0 28 28"><rect x="1" y="1" width="26" height="26" rx="4" fill="#e9e9e9" stroke="#b5b5b5" stroke-width="1.500"/><path d="M6 15l5 6L21 7" fill="none" stroke="#8a8a8a" stroke-width="3"/></svg><i class="swatch"></i><b>city_boundary</b></div>
        </div>
      </section>
    </aside>

    <section class="map">
      <svg width="2000" height="1854" viewBox="762 264 2000 1854">
        <path class="boundary" d="M1377 289H1594L2003 529 2711 601 2709 756 2707 1130V1820L2709 1957 2610 1927 2525 1891 2514 1897H2457L2377 1895 2347 1891 2298 1877 2260 1858 2219 1845 2178 1859 2132 1866 2099 1876 2059 1894 2034 1897 1961 1902 1888 1895H1863L1836 1902 1781 1931 1779 1938 1701 1982 1668 1990 1595 1962 1602 1949 1594 1939 1537 1903 1500 1888 1482 1865 1464 1843 1408 1784 1339 1750 1217 1741 1117 1684 1108 1683 1097 1677H1075L1057 1672 1043 1663 1028 1644 1027 1630 1020 1626 1012 1615 984 1607 980 1592 969 1574 966 1559 942 1530 914 1509 886 1489 859 1469 829 1441 851 1393 958 1456 985 1427 1069 1461V1437H1053V1409H1069V1297H1050L997 1256V1251L1030 1241 1045 1239H1053V1243H1062L1071 1241V1206H1073V1149L1024 1147 1011 1145V1134L1009 1123H934L895 1121V1075L897 1074V1000H899V992H870L855 993V969H844L835 971V947L809 915V902L807 901V878L833 769 1377 781Z"/>
      </svg>
    </section>
  </main>

  <footer class="status">
    <span class="msg">Toggles the editing state of the current layer</span>
    <span class="lbl coord-l">Coordinate</span>
    <span class="coord">483328,5455448</span>
    <span class="sbtn mouse"><svg width="32" height="34" viewBox="0 0 32 34"><g transform="rotate(-28 16 17)" fill="none" stroke="#222" stroke-width="2"><rect x="9" y="1" width="12" height="20" rx="5" fill="#ccc"/><path d="M13 2v18M17 2v18M9 9h12"/><rect x="11" y="17" width="13" height="15" rx="6" fill="#f4e8e8"/><path d="M17 18v6h-3"/></g><path d="M1 22l7-2M25 9l5-6" stroke="#222" stroke-width="2"/></svg></span>
    <span class="lbl scale-l">Scale</span>
    <span class="combo"><span>1:43,658</span><i><svg width="16" height="12" viewBox="0 0 16 12"><path d="M2 2l6 7 6-7" fill="none" stroke="#fff" stroke-width="2.500"/></svg></i></span>
    <span class="sbtn lock"><svg width="26" height="34" viewBox="0 0 26 34"><path d="M6 18V10c0-11 14-11 14 0v8" fill="none" stroke="#777" stroke-width="3"/><rect x="1" y="17" width="24" height="16" rx="3" fill="#666"/></svg></span>
    <span class="lbl mag-l">Magnifier</span>
    <span class="field mag">100%</span>
    <svg class="step" width="26" height="46" viewBox="0 0 26 46"><rect x="1" y="1" width="24" height="43" rx="11" fill="#fff" stroke="#b9b9b9" stroke-width="1.800"/><path d="M8.500 17l4.500-5 4.500 5M8.500 29l4.500 5 4.500-5" fill="none" stroke="#333" stroke-width="2.400"/></svg>
    <span class="lbl rot-l">Rotation</span>
    <span class="field rot">0.0</span>
    <svg class="step" width="26" height="46" viewBox="0 0 26 46"><rect x="1" y="1" width="24" height="43" rx="11" fill="#fff" stroke="#b9b9b9" stroke-width="1.800"/><path d="M8.500 17l4.500-5 4.500 5M8.500 29l4.500 5 4.500-5" fill="none" stroke="#333" stroke-width="2.400"/></svg>
    <svg class="rcheck" width="28" height="28" viewBox="0 0 28 28"><rect x="1" y="1" width="26" height="26" rx="4" fill="#f4f4f4" stroke="#bdbdbd" stroke-width="1.500"/><path d="M7 15l5 6L21 8" fill="none" stroke="#dcdcdc" stroke-width="2.500"/></svg>
    <span class="lbl ren-l">Render</span>
    <span class="sbtn crs"><svg width="32" height="32" viewBox="0 0 32 32"><circle cx="16" cy="16" r="12" fill="#ddd" stroke="#444" stroke-width="4"/><path d="M16 2v28M2 16h28M8 8q8 5 16 0M8 24q8-5 16 0M10 5q-5 11 0 22M22 5q5 11 0 22" fill="none" stroke="#444" stroke-width="2"/><path d="M16 0l4 4h-8zM16 32l4-4h-8zM0 16l4-4v8zM32 16l-4-4v8z" fill="#333"/></svg>EPSG:3157 (OTF)</span>
    <span class="sbtn talk"><svg width="34" height="32" viewBox="0 0 34 32"><path d="M17 2c21 0 21 23 8 24l3 6-11-6C-5 26-5 2 17 2z" fill="#636363"/><path d="M7 14h4M15 14h4M23 14h4" stroke="#fff" stroke-width="4"/></svg></span>
    <svg class="sizer" width="20" height="22" viewBox="0 0 20 22"><path d="M0 21L20 0M8 21L20 8M15 21l5-5" stroke="#777" stroke-width="1.600"/></svg>
  </footer>

  <svg class="callout" width="2762" height="2210" viewBox="0 0 2762 2210">
    <rect x="107.500" y="1081" width="589.500" height="106" fill="none" stroke="#b11d11" stroke-width="15"/>
    <path d="M736 1090L792 1028 803 1055 995 980 1000.500 994.500 809 1069 819 1097z" fill="#b11d11"/>
    <text class="callout-num" x="1032" y="1020.500">1</text>
    <text class="callout-text" x="1201" y="1020.500" textLength="534" lengthAdjust="spacingAndGlyphs">Layer</text>
  </svg>
</div>
</body>
</html>
```
FILE: styles.css
```css
* { box-sizing: border-box; }
body {
  margin: 0;
  width: 2762px;
  height: 2210px;
  overflow: hidden;
  padding: 2px 0 2px 2px;
  background: linear-gradient(#5c6468, #7d8a88 30%, #2a3542 60%, #201418);
  font-family: "Liberation Sans", Arial, sans-serif;
  font-size: 26px;
  color: #000;
}
.defs { position: absolute; }
svg { display: block; flex: none; overflow: visible; }
.window {
  width: 2760px;
  height: 2206px;
  display: flex;
  flex-direction: column;
  background: #ebebeb;
  border-radius: 10px;
  overflow: hidden;
}
.titlebar {
  height: 44px;
  flex: none;
  display: flex;
  align-items: center;
  padding-left: 16px;
  background: #f6f6f6;
  border-bottom: 2px solid #cbcbcb;
}
.title {
  flex: 1;
  margin: 4px 124px 0 0;
  text-align: center;
  font: 400 26px/30px Inter, "Open Sans", sans-serif;
  letter-spacing: .4px;
  color: #b2b2b2;
}
.toolbar {
  height: 72px;
  flex: none;
  display: flex;
  align-items: center;
  padding: 0 0 0 2px;
  background: linear-gradient(#eee, #c7c7c7);
  border-top: 2px solid #fff;
  border-bottom: 2px solid #adadad;
}
.grip { width: 18px; height: 50px; flex: none; padding-left: 12px; }
.grip svg { width: 12px; height: 50px; }
.tool {
  width: 76px;
  height: 68px;
  flex: none;
  position: relative;
  display: flex;
  align-items: center;
  justify-content: center;
}
.tool svg { width: 48px; height: 48px; }
.tool.menu { width: 100px; }
.off svg { opacity: .5; }
.menu::after, .corner::after {
  content: "";
  position: absolute;
  border: 8px solid transparent;
  border-top: 15px solid #606060;
  border-bottom: 0;
}
.tool.menu::after { left: 78px; top: 38px; }
.corner::after { left: 51px; top: 48px; border-width: 10px 7px 0; opacity: .55; }
.tool.active { width: 68px; margin: 0 4px; background: linear-gradient(#e0e0e0, #a8a8a8); }
.workspace { flex: 1; display: flex; min-height: 0; }
.dock {
  width: 96px;
  flex: none;
  border-right: 2px solid #b0b0b0;
  background: linear-gradient(90deg, #efefef, #c6c6c6);
}
.dock-grip { display: block; height: 18px; padding: 10px 0 0 14px; }
.dock-grip.first { height: 20px; padding-top: 12px; }
.dock-grip svg { width: 74px; height: 12px; }
.dock-tool { height: 76px; position: relative; display: flex; align-items: center; padding-left: 12px; }
.dock-tool.wide { padding-left: 24px; }
.dock-tool svg { width: 48px; height: 48px; }
.dock-tool.menu::after { left: 76px; top: 42px; }
.panels { width: 664px; flex: none; display: flex; flex-direction: column; border-right: 2px solid #b0b0b0; }
.panel { display: flex; flex-direction: column; border-right: 2px solid #8f8f8f; }
.browser { height: 744px; flex: none; }
.layers { flex: 1; }
.panel-head {
  height: 52px;
  flex: none;
  display: flex;
  align-items: center;
  gap: 12px;
  padding: 0 8px 2px 6px;
  background: linear-gradient(#eee, #c8c8c8);
  border-top: 2px solid #fff;
  border-bottom: 2px solid #adadad;
}
.panel-head svg { width: 28px; height: 28px; }
.panel-head h2 { flex: 1; margin: 0; font-weight: 400; font-size: 22px; line-height: 26px; text-align: center; }
.panel-tools {
  height: 58px;
  flex: none;
  display: flex;
  align-items: center;
  border-top: 2px solid #fff;
  border-bottom: 2px solid #8f8f8f;
  box-shadow: inset 0 -2px #adadad;
  background: linear-gradient(#eee, #c8c8c8);
}
.panel-tools span { width: 60px; position: relative; display: flex; justify-content: center; padding-right: 4px; }
.panel-tools svg { width: 32px; height: 32px; }
.panel-tools span.menu { width: 84px; }
.panel-tools span.menu::after { left: 61px; top: 15px; }
.tree {
  flex: 1;
  list-style: none;
  margin: 0 0 2px;
  padding: 0;
  background: #fff;
  border-left: 2px solid #b0b0b0;
  border-right: 2px solid #b0b0b0;
  border-bottom: 2px solid #b4b4b4;
  box-shadow: 0 2px #999;
}
.tree li { height: 36px; display: flex; align-items: center; gap: 12px; padding-left: 50px; line-height: 30px; white-space: nowrap; }
.tree li svg { width: 32px; height: 32px; }
.tree li.branch { padding-left: 14px; }
.tree li.branch::before { content: ""; border: 9px solid transparent; border-left: 15px solid #8a8a8a; border-right: 0; margin-right: 9px; }
.layer-list { flex: 1; background: #fff; border: solid #b0b0b0; border-width: 0 2px 2px; }
.layer { height: 40px; display: flex; align-items: center; padding-left: 55px; background: #d0d0d0; }
.check { width: 27px; height: 28px; }
.swatch { width: 32px; height: 2px; margin: 0 12px 0 26px; background: #bccb90; }
.layer b { line-height: 30px; text-decoration: underline; text-decoration-thickness: 2px; text-underline-offset: 3px; text-decoration-skip-ink: none; }
.map { flex: 1; background: #fff; border-top: 2px solid #8f8f8f; border-bottom: 2px solid #b0b0b0; min-width: 0; overflow: hidden; }
.boundary { fill: none; stroke: #c8d06c; stroke-width: 2; shape-rendering: crispEdges; }
.status { height: 88px; flex: none; display: flex; align-items: flex-start; white-space: nowrap; line-height: 30px; }
.status > * { flex: none; }
.msg { width: 771px; padding-left: 12px; margin-top: 27px; }
.lbl { margin-top: 27px; }
.coord-l { padding-left: 11px; width: 149px; }
.coord { width: 246px; height: 34px; margin-top: 26px; padding: 1px 28px 0 24px; background: #fff; }
.sbtn { display: flex; align-items: center; justify-content: center; border: 2px solid #cacaca; background: linear-gradient(#e6e6e6, #f0f0f0); }
.mouse { width: 52px; height: 52px; margin: 18px 0 0 4px; }
.scale-l { width: 90px; padding-left: 18px; margin-top: 26px; }
.combo { width: 236px; height: 43px; margin-top: 18px; display: flex; background: #fff; border: solid #b9b9b9; border-width: 2px 0 0 2px; }
.combo span { width: 198px; padding: 7px 0 0 3px; }
.combo i { flex: 1; display: flex; align-items: center; justify-content: center; background: linear-gradient(#d2d2d2, #c6c6c6); border-radius: 0 5px 5px 0; }
.lock { width: 52px; height: 52px; margin-top: 16px; }
.mag-l { width: 134px; padding-left: 18px; }
.field { height: 44px; margin-top: 22px; padding: 6px 0 0 4px; background: #fff; border: 2px solid #b9b9b9; }
.mag { width: 128px; }
.step { margin: 23px 0 0 6px; }
.rot-l { width: 139px; padding-left: 20px; }
.rot { width: 126px; }
.rcheck { margin: 30px 0 0 15px; }
.ren-l { width: 98px; padding-left: 8px; }
.crs { width: 290px; height: 37px; margin-top: 26px; justify-content: flex-start; padding: 0 0 2px 8px; gap: 7px; }
.talk { width: 75px; height: 37px; margin: 26px 0 0 12px; justify-content: flex-start; padding-left: 8px; }
.sizer { margin: 66px 0 0 30px; }
.callout { position: absolute; left: 0; top: 0; pointer-events: none; }
.callout text { fill: #b11d11; font-weight: 700; font-size: 206px; }
.callout-text { font-family: "Liberation Sans", Arial, sans-serif; }
.callout .callout-num { font-family: Roboto, sans-serif; font-size: 200px; }
```
